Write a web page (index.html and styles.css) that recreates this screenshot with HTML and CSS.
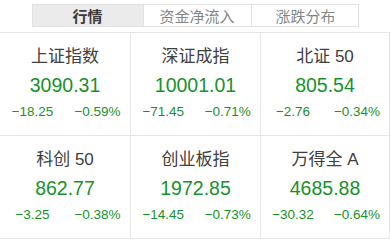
FILE: index.html
```html
<!DOCTYPE html>
<html lang="zh">
<head>
<meta charset="utf-8">
<link rel="stylesheet" href="styles.css">
</head>
<body>
<div class="tabs">
  <div class="tab active">行情</div>
  <div class="tab">资金净流入</div>
  <div class="tab">涨跌分布</div>
</div>
<div class="grid">
  <div class="cell"><div class="name">上证指数</div><div class="value">3090.31</div><div class="chg"><span>−18.25</span><span>−0.59%</span></div></div>
  <div class="cell"><div class="name">深证成指</div><div class="value">10001.01</div><div class="chg"><span>−71.45</span><span>−0.71%</span></div></div>
  <div class="cell"><div class="name">北证 50</div><div class="value">805.54</div><div class="chg"><span>−2.76</span><span>−0.34%</span></div></div>
  <div class="cell"><div class="name">科创 50</div><div class="value">862.77</div><div class="chg"><span>−3.25</span><span>−0.38%</span></div></div>
  <div class="cell"><div class="name">创业板指</div><div class="value">1972.85</div><div class="chg"><span>−14.45</span><span>−0.73%</span></div></div>
  <div class="cell"><div class="name">万得全 A</div><div class="value">4685.88</div><div class="chg"><span>−30.32</span><span>−0.64%</span></div></div>
</div>
</body>
</html>
```
FILE: styles.css
```css
* { box-sizing: border-box; }
body {
  margin: 0;
  background: #fff;
  font-family: "Liberation Sans", "Noto Sans CJK SC", sans-serif;
  color: #333;
}
.tabs {
  display: grid;
  grid-template-columns: 110px 108px 109px;
  width: 327px;
  margin: 4px auto 0;
  border: 1px solid #e2e2e2;
  height: 23px;
}
.tab {
  display: flex;
  align-items: center;
  justify-content: center;
  font-size: 15px;
  color: #858585;
  border-left: 1px solid #e2e2e2;
}
.tab:first-child { border-left: none; }
.tab.active {
  background: #ebebeb;
  color: #3a3a3a;
  font-weight: bold;
}
.grid {
  margin-top: 5px;
  display: grid;
  grid-template-columns: 131px 130px 129px;
  border-top: 1px solid #e6e6e6;
}
.cell {
  height: 103px;
  border-right: 1px solid #e6e6e6;
  border-bottom: 1px solid #e6e6e6;
  padding-top: 12px;
  text-align: center;
}
.name {
  font-size: 17px;
  line-height: 24px;
  color: #404040;
}
.value {
  margin-top: 2px;
  font-size: 19.5px;
  line-height: 28px;
  color: #17922a;
}
.chg {
  margin-top: 3px;
  display: grid;
  grid-template-columns: 1fr 1fr;
  font-size: 13.5px;
  line-height: 20px;
  color: #17922a;
}
```
